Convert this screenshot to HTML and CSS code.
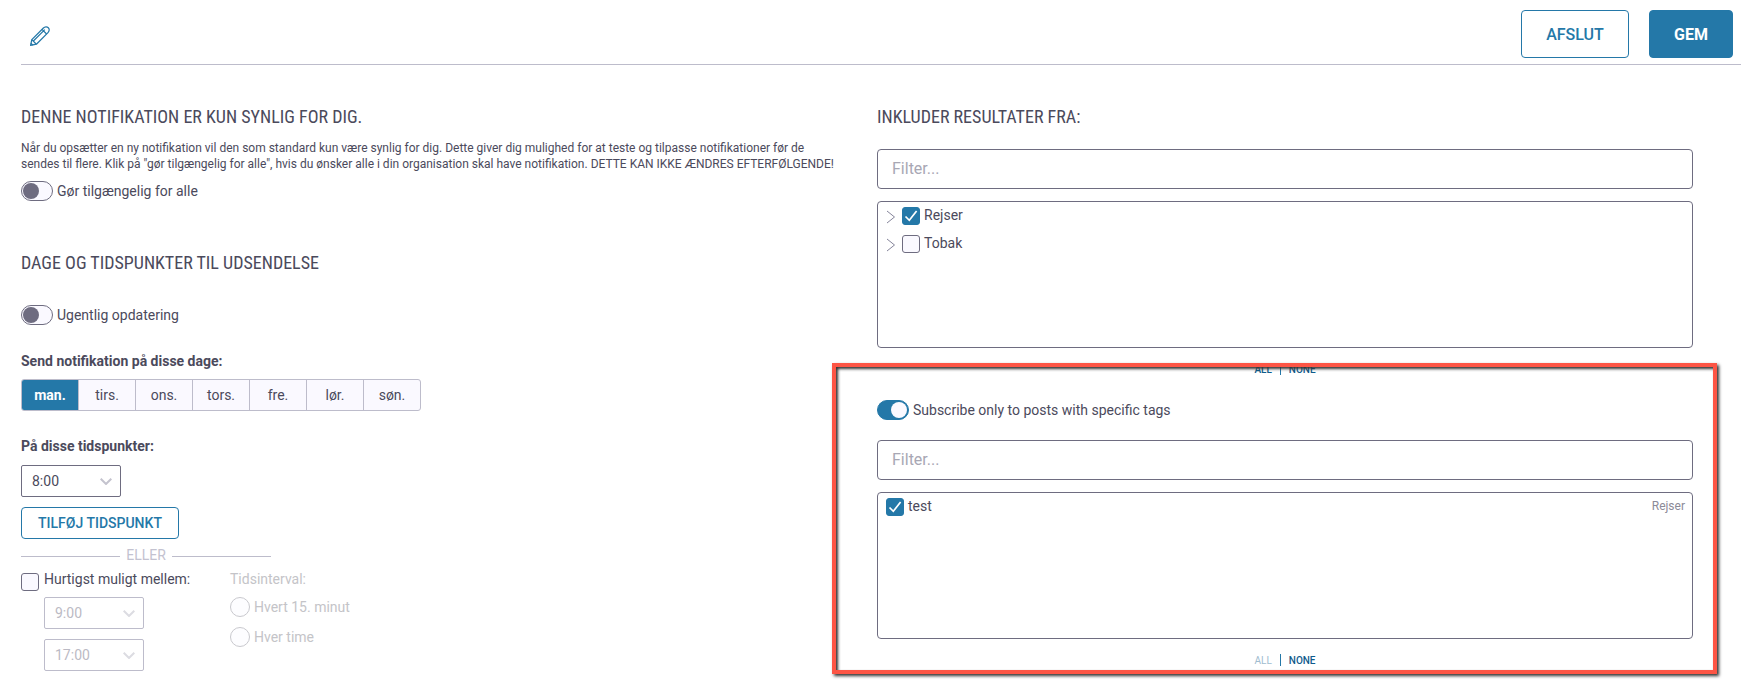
FILE: index.html
```html
<!DOCTYPE html>
<html lang="da">
<head>
<meta charset="utf-8">
<title>Notifikation</title>
<link rel="stylesheet" href="styles.css">
</head>
<body>
<header class="topbar">
  <svg class="pencil" viewBox="0 0 20 20" width="20" height="20" fill="none" stroke="#2478a8" stroke-width="1.25" stroke-linejoin="round">
    <path d="M0.6 19.4 L1.8 13.6 L13.4 2 C14.9 0.5 17 0.4 18.3 1.7 C19.6 3 19.5 5.1 18 6.6 L6.4 18.2 Z"/>
    <path d="M1.8 13.6 L6.4 18.2 M12 3.4 L16.6 8 M3.6 14.8 L14.8 3.6 M0.9 17.2 L2.8 19.1"/>
  </svg>
  <div class="actions">
    <button class="btn btn-outline btn-top">AFSLUT</button>
    <button class="btn btn-solid btn-top">GEM</button>
  </div>
</header>

<main class="columns">
  <section class="col-left">
    <h2 class="heading first">DENNE NOTIFIKATION ER KUN SYNLIG FOR DIG.</h2>
    <p class="desc">Når du opsætter en ny notifikation vil den som standard kun være synlig for dig. Dette giver dig mulighed for at teste og tilpasse notifikationer før de<br>sendes til flere. Klik på "gør tilgængelig for alle", hvis du ønsker alle i din organisation skal have notifikation. DETTE KAN IKKE ÆNDRES EFTERFØLGENDE!</p>
    <div class="toggle-row row-public"><span class="toggle"></span><span>Gør tilgængelig for alle</span></div>

    <h2 class="heading second">DAGE OG TIDSPUNKTER TIL UDSENDELSE</h2>
    <div class="toggle-row row-weekly"><span class="toggle"></span><span>Ugentlig opdatering</span></div>

    <div class="label label-days">Send notifikation på disse dage:</div>
    <div class="days">
      <span class="day active">man.</span><span class="day">tirs.</span><span class="day">ons.</span><span class="day">tors.</span><span class="day">fre.</span><span class="day">lør.</span><span class="day">søn.</span>
    </div>

    <div class="label label-times">På disse tidspunkter:</div>
    <div class="select"><span>8:00</span><svg class="chev" viewBox="0 0 12 7" width="12" height="7"><path d="M0.7 0.7 L6 6 L11.3 0.7" fill="none" stroke="#c4c3ce" stroke-width="2"/></svg></div>
    <button class="btn btn-outline btn-add">TILFØJ TIDSPUNKT</button>

    <div class="or"><span class="or-line"></span><span class="or-text">ELLER</span><span class="or-line"></span></div>

    <div class="fast">
      <div class="fast-main">
        <div class="fast-head"><span class="check"></span><span>Hurtigst muligt mellem:</span></div>
        <div class="select disabled sel-a"><span>9:00</span><svg class="chev" viewBox="0 0 12 7" width="12" height="7"><path d="M0.7 0.7 L6 6 L11.3 0.7" fill="none" stroke="#dcdce2" stroke-width="2"/></svg></div>
        <div class="select disabled sel-b"><span>17:00</span><svg class="chev" viewBox="0 0 12 7" width="12" height="7"><path d="M0.7 0.7 L6 6 L11.3 0.7" fill="none" stroke="#dcdce2" stroke-width="2"/></svg></div>
      </div>
      <div class="interval">
        <div class="interval-title">Tidsinterval:</div>
        <div class="radio-row"><span class="radio"></span><span>Hvert 15. minut</span></div>
        <div class="radio-row"><span class="radio"></span><span>Hver time</span></div>
      </div>
    </div>
  </section>

  <section class="col-right">
    <h2 class="heading first">INKLUDER RESULTATER FRA:</h2>
    <div class="filter filter-first">Filter...</div>
    <div class="listbox">
      <div class="tree-row"><svg class="tree-arrow" viewBox="0 0 10 14" width="10" height="14"><path d="M1 1 L8.5 7 L1 13" fill="none" stroke="#85849a" stroke-width="1"/></svg>
        <span class="check checked"><svg viewBox="0 0 18 18" width="18" height="18"><path d="M3.5 9.5 L7.3 13.3 L14.6 4" fill="none" stroke="#fff" stroke-width="1.7"/></svg></span><span>Rejser</span></div>
      <div class="tree-row"><svg class="tree-arrow" viewBox="0 0 10 14" width="10" height="14"><path d="M1 1 L8.5 7 L1 13" fill="none" stroke="#85849a" stroke-width="1"/></svg>
        <span class="check"></span><span>Tobak</span></div>
    </div>
    <div class="allnone"><span class="link-on">ALL</span><span class="sep"></span><span class="link-on">NONE</span></div>

    <div class="toggle-row row-tags"><span class="toggle on"></span><span>Subscribe only to posts with specific tags</span></div>
    <div class="filter filter-second">Filter...</div>
    <div class="listbox">
      <div class="tag-row"><span class="check checked"><svg viewBox="0 0 18 18" width="18" height="18"><path d="M3.5 9.5 L7.3 13.3 L14.6 4" fill="none" stroke="#fff" stroke-width="1.7"/></svg></span><span>test</span><span class="tag-source">Rejser</span></div>
    </div>
    <div class="allnone"><span class="link-off">ALL</span><span class="sep"></span><span class="link-on">NONE</span></div>
  </section>
</main>

<div class="callout"></div>
</body>
</html>
```
FILE: styles.css
```css
* { box-sizing: border-box; }
html, body { margin: 0; padding: 0; }
body {
  position: relative;
  height: 699px;
  overflow: hidden;
  background: #fff;
  color: #4b4a5c;
  font-family: Roboto, "Liberation Sans", sans-serif;
  font-size: 14px;
}
.topbar {
  display: flex;
  align-items: flex-start;
  justify-content: space-between;
  height: 65px;
  margin-left: 21px;
  padding: 10px 8px 0 9px;
  border-bottom: 1px solid #bdbccb;
}
.pencil { margin-top: 16px; }
.actions { display: flex; gap: 20px; }
.btn {
  font-family: Roboto, "Liberation Sans", sans-serif;
  font-weight: 500;
  border-radius: 4px;
  border: 1px solid #2478a8;
  cursor: pointer;
}
.btn-outline { background: #fff; color: #2478a8; }
.btn-solid { background: #2478a8; color: #fff; }
.btn-top { height: 48px; font-size: 16px; }
.btn-top.btn-outline { width: 108px; }
.btn-top.btn-solid { width: 84px; font-weight: 700; }
.columns { display: flex; padding-left: 21px; }
.col-left { width: 856px; flex: none; }
.col-right { width: 816px; flex: none; }
.heading {
  margin: 0;
  font-family: "Roboto Condensed", "Liberation Sans Narrow", Roboto, sans-serif;
  font-stretch: condensed;
  font-size: 18px;
  font-weight: 400;
  line-height: 22px;
  color: #4b4a5c;
}
.heading.first { margin-top: 41px; }
.heading.second { margin-top: 51px; }
.desc { margin: 12px 0 0; font-size: 12px; line-height: 16px; }
.toggle-row { display: flex; align-items: center; gap: 4px; height: 20px; line-height: 20px; }
.row-public { margin-top: 9px; }
.row-weekly { margin-top: 31px; }
.row-tags { margin-top: 25px; }
.toggle {
  position: relative;
  display: block;
  width: 32px;
  height: 20px;
  border: 1px solid #6e6c80;
  border-radius: 10px;
  background: #faf9ff;
}
.toggle::after {
  content: "";
  position: absolute;
  left: 1px;
  top: 1px;
  width: 16px;
  height: 16px;
  border-radius: 50%;
  background: #6e6c80;
}
.toggle.on { background: #2478a8; border-color: #2478a8; }
.toggle.on::after { left: 13px; background: #faf9ff; }
.label { font-weight: 700; line-height: 20px; }
.label-days { margin-top: 26px; }
.days { display: flex; width: 400px; height: 32px; margin-top: 8px; border: 1px solid #bdbccb; border-radius: 3px; overflow: hidden; background: #faf9ff; }
.day { flex: 1; display: flex; align-items: center; justify-content: center; border-left: 1px solid #bdbccb; }
.day:first-child { border-left: 0; }
.day.active { background: #2478a8; color: #fff; font-weight: 700; }
.label-times { margin-top: 25px; }
.select {
  display: flex;
  align-items: center;
  justify-content: space-between;
  width: 100px;
  height: 32px;
  margin-top: 9px;
  padding: 0 8px 0 10px;
  border: 1px solid #6e6c80;
  border-radius: 2px;
}
.select.disabled { border-color: #bdbccb; color: #bbbac4; }
.sel-a { margin: 8px 0 0 23px; }
.sel-b { margin: 10px 0 0 23px; }
.btn-add { display: block; width: 158px; height: 32px; margin-top: 10px; font-size: 14px; padding: 0; }
.or { display: flex; align-items: center; width: 250px; gap: 6px; height: 20px; margin-top: 6px; color: #c3c2d0; }
.or-line { flex: 1; height: 1px; margin-top: 3px; background: #bdbccb; }
.fast { display: flex; margin-top: 4px; }
.fast-main { width: 209px; }
.fast-head { display: flex; gap: 5px; height: 20px; line-height: 20px; }
.check {
  display: block;
  flex: none;
  width: 18px;
  height: 18px;
  border: 1px solid #6e6c80;
  border-radius: 3px;
  background: #faf9ff;
}
.fast-head .check { margin-top: 4px; }
.check svg { display: block; margin: -1px; }
.check.checked { background: #2478a8; border-color: #2478a8; }
.interval { color: #c4c4c8; }
.interval-title { line-height: 20px; }
.radio-row { display: flex; align-items: center; gap: 4px; height: 20px; margin-top: 8px; }
.radio-row + .radio-row { margin-top: 10px; }
.radio { display: block; width: 20px; height: 20px; border: 1px solid #c9c9ce; border-radius: 50%; background: #fdfdff; }
.filter {
  height: 40px;
  padding: 0 14px;
  border: 1px solid #6e6c80;
  border-radius: 4px;
  font-size: 16px;
  line-height: 38px;
  color: #a8a7b4;
}
.filter-first { margin-top: 21px; }
.filter-second { margin-top: 20px; }
.listbox {
  height: 147px;
  margin-top: 12px;
  padding: 5px 8px;
  border: 1px solid #6e6c80;
  border-radius: 4px;
}
.tree-row { display: flex; gap: 5px; height: 28px; line-height: 16px; }
.tree-arrow { margin-top: 3px; margin-right: 1px; }
.tree-row span:last-child { margin-left: -1px; }
.tag-row { display: flex; gap: 4px; line-height: 16px; }
.tag-source { margin-left: auto; margin-right: -1px; font-size: 12px; color: #8b8a98; }
.allnone { display: flex; align-items: center; justify-content: center; gap: 8px; height: 12px; margin-top: 15px; font-size: 10px; font-weight: 500; }
.sep { display: block; width: 1px; height: 12px; background: #2478a8; }
.link-on { color: #0f5c8c; }
.link-off { color: #a0bccf; font-weight: 400; }
.callout {
  position: absolute;
  left: 832px;
  top: 363px;
  width: 885px;
  height: 311px;
  border: 4px solid #fd5545;
  box-shadow: 2px 2px 3px #333, inset 2px 2px 3px #333;
  pointer-events: none;
}
```
